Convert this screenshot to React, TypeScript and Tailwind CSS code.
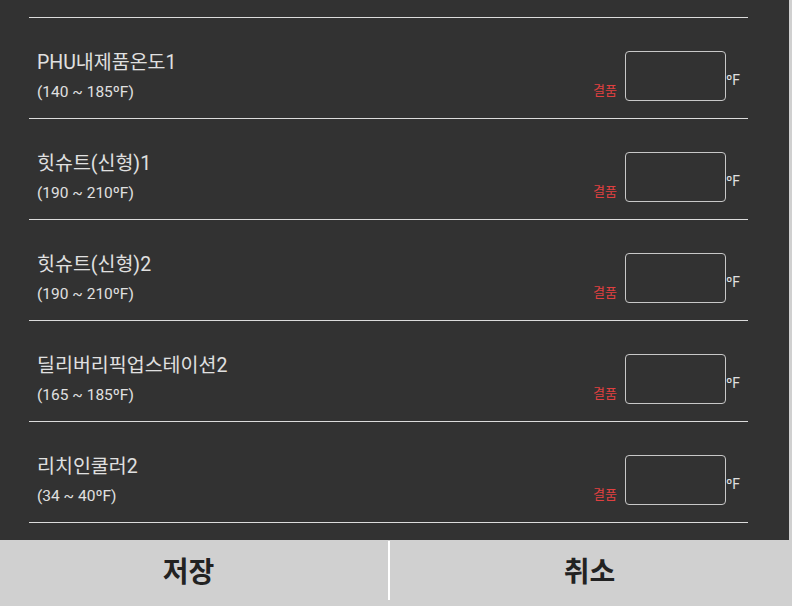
const rows = [
  { name: 'PHU내제품온도1', range: '(140 ~ 185ºF)' },
  { name: '힛슈트(신형)1', range: '(190 ~ 210ºF)' },
  { name: '힛슈트(신형)2', range: '(190 ~ 210ºF)' },
  { name: '딜리버리픽업스테이션2', range: '(165 ~ 185ºF)' },
  { name: '리치인쿨러2', range: '(34 ~ 40ºF)' },
];

function TempRow({ name, range }: { name: string; range: string }) {
  return (
    <div className="flex h-[101px] justify-between border-b border-[#dcdcdc] pl-2 pr-[22px]">
      <div className="pt-[32px]">
        <p className="text-[19.5px] leading-[26px] text-[#e0e0e0]">{name}</p>
        <p className="mt-[6px] text-[15.5px] leading-[20px] text-[#e0e0e0]">{range}</p>
      </div>
      <div className="relative flex items-end pb-[17px]">
        <span className="mb-[2px] mr-2 text-[13px] leading-[16px] text-[#e04040]">결품</span>
        <input
          type="text"
          className="h-[50px] w-[101px] rounded-[4px] border border-[#c8c8c8] bg-transparent px-2 text-[#e0e0e0] outline-none"
        />
        <span className="absolute bottom-[28px] left-full text-[14px] leading-[20px] text-[#e0e0e0]">ºF</span>
      </div>
    </div>
  );
}

export default function App() {
  return (
    <div
      className="flex h-[606px] w-[792px] flex-col overflow-hidden bg-[#d0d0d0]"
      style={{ fontFamily: 'Roboto, "Noto Sans CJK KR", sans-serif' }}
    >
      <div className="flex h-[540px] w-[789px] flex-col bg-[#323232] pl-[29px] pr-[41px]">
        <div className="h-[18px] border-b border-[#dcdcdc]" />
        {rows.map((r) => (
          <TempRow key={r.name} name={r.name} range={r.range} />
        ))}
      </div>
      <div className="flex flex-1">
        <button className="flex w-[388px] items-center justify-center pr-[11px] text-[28px] font-bold text-[#222]">저장</button>
        <div className="mb-[6px] mt-[1px] w-[2px] bg-white" />
        <button className="flex flex-1 items-center justify-center text-[28px] font-bold text-[#222]">취소</button>
        <div className="w-[3px]" />
      </div>
    </div>
  );
}
